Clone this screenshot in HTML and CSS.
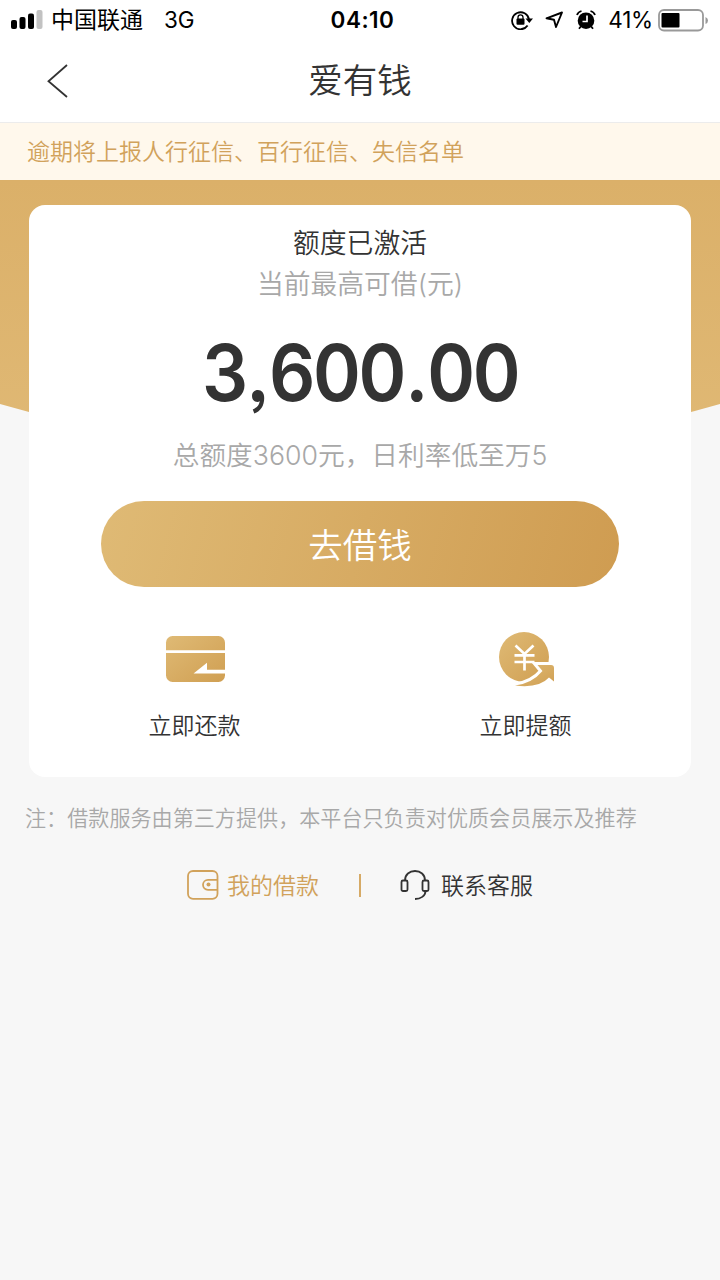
FILE: index.html
```html
<!DOCTYPE html>
<html lang="zh-CN">
<head>
<meta charset="utf-8">
<title>爱有钱</title>
<link rel="stylesheet" href="styles.css">
</head>
<body>
<header class="status">
  <div class="status-left">
    <svg width="32" height="20" viewBox="0 0 32 20"><rect x="0" y="10" width="6" height="9" rx="2"/><rect x="8.500" y="7" width="6" height="12" rx="2"/><rect x="17" y="3.500" width="6" height="15.500" rx="2"/><rect x="25.500" y="0" width="6" height="19" rx="2" fill="#c2c2c2"/></svg>
    <span class="carrier">中国联通</span><span class="network">3G</span>
  </div>
  <span class="clock">04:10</span>
  <div class="status-right">
    <svg class="lock" width="22" height="20" viewBox="0 0 22 20"><path d="M16.600 15.600A8.500 8.500 0 1 1 18 9.500" fill="none" stroke="#000" stroke-width="1.800"/><path d="M14.500 8.500H22L18.300 13Z"/><rect x="5.500" y="8.500" width="8" height="6.300" rx="1"/><path d="M7 9V7.300a2.500 2.500 0 0 1 5 0V9" fill="none" stroke="#000" stroke-width="1.300"/></svg>
    <svg class="arrow" width="19" height="18" viewBox="0 0 19 18"><path d="M1.500 7.300 17 1.500 11 16 9 8.800Z" fill="none" stroke="#000" stroke-width="1.900" stroke-linejoin="round"/></svg>
    <svg class="alarm" width="20" height="20" viewBox="0 0 20 20"><circle cx="10" cy="10.700" r="8.300"/><path d="M1 5Q2 2 5.500 1M19 5Q18 2 14.500 1M4.800 16.500 3 18.800M15.200 16.500 17 18.800" fill="none" stroke="#000" stroke-width="1.800"/><path d="M11 5.500v6H6.500" fill="none" stroke="#fff" stroke-width="1.700"/></svg>
    <span class="percent">41%</span>
    <svg class="battery" width="51" height="23" viewBox="0 0 51 23"><rect x="1" y="1" width="44" height="20.500" rx="5" fill="none" stroke="#999" stroke-width="1.800"/><rect x="3.500" y="4" width="18" height="14.500" rx="1"/><path d="M47.500 8q2.500 1 2.500 3.500t-2.500 3.500Z" fill="#999"/></svg>
  </div>
</header>
<nav class="nav">
  <svg class="back" width="22" height="34" viewBox="0 0 22 34"><path d="M20 1 1.500 17.200 20 33" fill="none" stroke="#333" stroke-width="1.800"/></svg>
  <h1 class="title">爱有钱</h1>
</nav>
<p class="notice">逾期将上报人行征信、百行征信、失信名单</p>
<main class="main">
  <svg class="hero" width="720" height="280" viewBox="0 0 720 280"><defs><linearGradient id="heroFill" x1="0" y1="0" x2="0" y2="1"><stop stop-color="#dbb069"/><stop offset="1" stop-color="#e0b975"/></linearGradient></defs><path d="M0 0H720V224Q360 328 0 224Z" fill="url(#heroFill)"/></svg>
  <section class="card">
    <h2 class="card-title">额度已激活</h2>
    <p class="sub">当前最高可借(元)</p>
    <p class="amount">3<span class="separator">,</span>600<span class="separator">.</span>00</p>
    <p class="rate">总额度3600元，日利率低至万5</p>
    <button class="borrow">去借钱</button>
    <div class="actions">
      <div class="action">
        <svg width="60" height="56" viewBox="0 0 60 56"><defs><linearGradient id="gold" x1="0" y1="0" x2="1" y2="1"><stop stop-color="#dfba75"/><stop offset="1" stop-color="#d09f52"/></linearGradient></defs><rect x="1" y="5" width="59" height="46" rx="6.500" fill="url(#gold)"/><path d="M1 19.200H60V22H1ZM28.500 42.500 42 31.800V38.800H60V42.500Z" fill="#fff"/></svg>
        <span>立即还款</span>
      </div>
      <div class="action">
        <svg width="60" height="56" viewBox="0 0 60 56"><circle cx="28" cy="26" r="25" fill="url(#gold)"/><path d="M19.500 14.500 28.500 23 37.500 14.500M18.500 24.300H38.500M18.500 31H38.500M28.500 23V39.500" fill="none" stroke="#fff" stroke-width="2.700"/><path d="M41.500 34H55Q58 34 58 37V50.500L53 46.500Q43 57.500 19 54.500Q36 52.500 46.500 40Z" fill="none" stroke="#fff" stroke-width="6"/><path d="M41.500 34H55Q58 34 58 37V50.500L53 46.500Q43 57.500 19 54.500Q36 52.500 46.500 40Z" fill="url(#gold)"/></svg>
        <span>立即提额</span>
      </div>
    </div>
  </section>
  <p class="note">注：借款服务由第三方提供，本平台只负责对优质会员展示及推荐</p>
  <footer class="links">
    <a class="link loans"><svg width="32" height="30" viewBox="0 0 32 30"><rect x="1" y="1" width="29.500" height="27.800" rx="5" fill="none" stroke="#d1a25b" stroke-width="1.800"/><path d="M30 9.800H21a5 5 0 0 0 0 10H30" fill="none" stroke="#d1a25b" stroke-width="1.800"/><circle cx="21.500" cy="14.600" r="2" fill="#d1a25b"/></svg><span>我的借款</span></a>
    <i class="divider"></i>
    <a class="link service"><svg width="30" height="30" viewBox="0 0 30 30"><g fill="none" stroke="#333" stroke-width="1.800"><rect x="1.500" y="10.500" width="6" height="10.500" rx="1.500"/><rect x="22.500" y="10.500" width="6" height="10.500" rx="1.500"/><path d="M5 10.500C5 4.500 9.500 1 15 1S25 4.500 25 10.500M25.500 21C25.500 26 20.500 29 15 29"/></g></svg><span>联系客服</span></a>
  </footer>
</main>
</body>
</html>
```
FILE: styles.css
```css
* { box-sizing: border-box; }
body { margin: 0; min-height: 1280px; background: #f7f7f7; color: #333; font-family: Inter, "Noto Sans CJK SC", sans-serif; font-weight: 350; }
h1, h2, p { margin: 0; font-weight: 350; }
svg { display: block; flex: none; }
.status { display: grid; grid-template-columns: 1fr auto 1fr; align-items: center; height: 40px; padding: 0 11px; background: #fff; color: #000; line-height: 40px; font-weight: 400; }
.status-left, .status-right { display: flex; align-items: center; }
.status-right { justify-content: flex-end; }
.carrier { margin-left: 8px; padding-top: 1px; font-size: 23px; line-height: 39px; }
.network { margin-left: 21px; font-size: 22.500px; letter-spacing: -.2px; }
.clock { padding-left: 5px; font-size: 22.500px; font-weight: 600; letter-spacing: .5px; }
.arrow { margin-left: 12px; }
.alarm { margin-left: 12px; }
.percent { margin: 0 5px 0 12px; font-size: 22.500px; letter-spacing: -.2px; }
.nav { display: grid; grid-template-columns: 60px 1fr 60px; align-items: center; height: 83px; padding: 0 47px; background: #fff; border-bottom: 1px solid #ececec; }
.title { font-size: 34.500px; line-height: 80px; text-align: center; }
.notice { height: 57px; padding-left: 27px; background: #fff8ec; color: #d1a25b; font-size: 23px; line-height: 59px; }
.main { position: relative; padding: 25px 29px 0; }
.hero { position: absolute; left: 0; top: 0; }
.card { position: relative; display: flex; flex-direction: column; align-items: center; height: 572px; padding-top: 18px; background: #fff; border-radius: 16px; }
.card-title { font-size: 26.800px; line-height: 40px; }
.sub { height: 44px; color: #a8a8a8; font-size: 26.800px; line-height: 42px; }
.amount { height: 132px; font-size: 78px; font-weight: 600; line-height: 132px; letter-spacing: -2.500px; font-feature-settings: "ss03"; transform: scaleX(.93); }
.separator { margin: 0 1.300px; }
.rate { height: 36px; color: #a8a8a8; font-size: 26.700px; line-height: 32px; }
.borrow { width: 518px; height: 86px; margin-top: 26px; padding: 0 0 2px; border: 0; border-radius: 43px; background: linear-gradient(105deg, #dfba75, #cf9c51); color: #fff; font: 350 34.500px/84px "Noto Sans CJK SC", sans-serif; }
.actions { display: grid; grid-template-columns: 1fr 1fr; width: 100%; margin-top: 44px; }
.action { display: flex; flex-direction: column; align-items: center; gap: 19px; font-size: 23px; line-height: 40px; }
.note { margin: 21px -20px 0 -4px; color: #a8a8a8; font-size: 21.100px; line-height: 41px; white-space: nowrap; }
.links { display: flex; align-items: center; justify-content: center; margin-top: 25px; font-size: 23px; line-height: 40px; }
.link { display: flex; align-items: center; }
.link span { padding-top: 2px; }
.loans { gap: 8px; color: #d1a25b; }
.service { gap: 11px; }
.divider { width: 2px; height: 23px; margin: 0 39px 0 40px; background: #d6aa66; }
```
